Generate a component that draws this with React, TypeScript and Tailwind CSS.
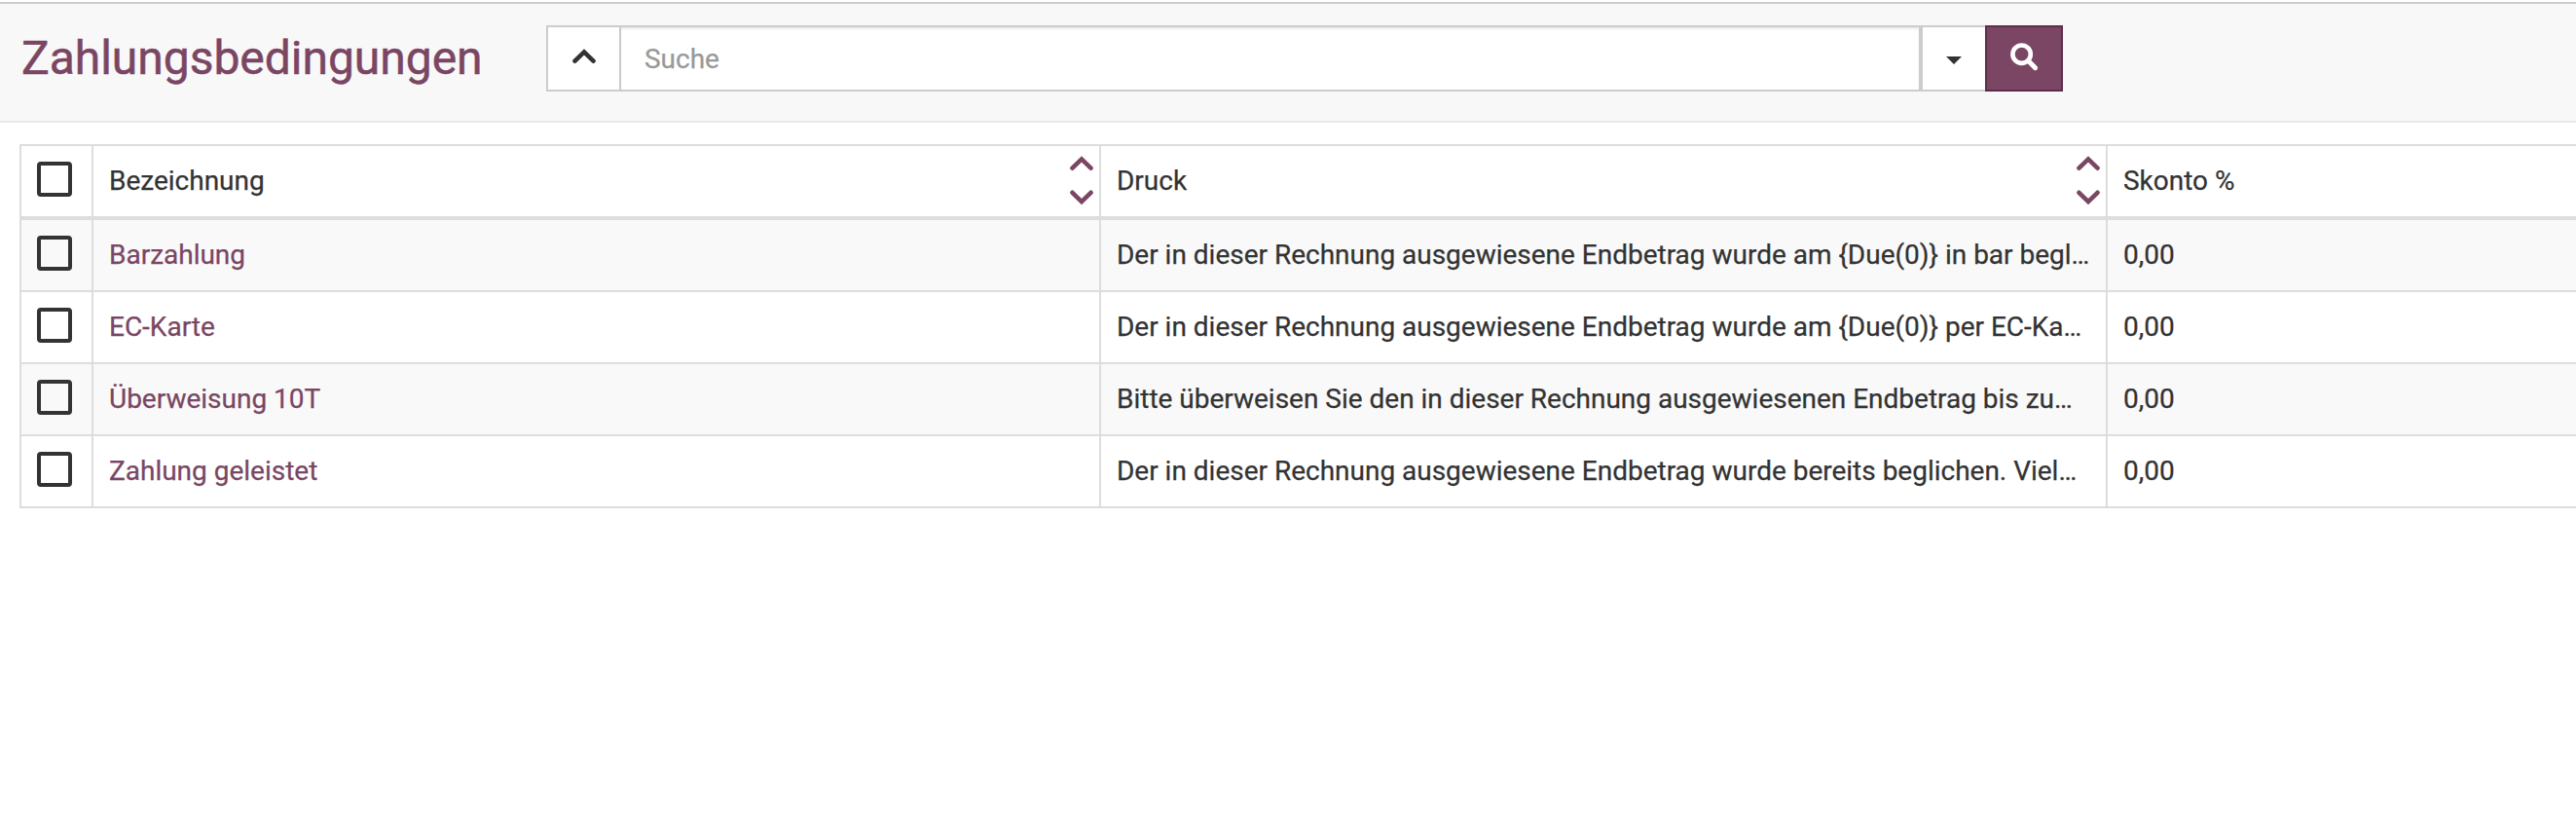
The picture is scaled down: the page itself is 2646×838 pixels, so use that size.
const rows = [
  { name: "Barzahlung", print: "Der in dieser Rechnung ausgewiesene Endbetrag wurde am {Due(0)} in bar begl…", discount: "0,00" },
  { name: "EC-Karte", print: "Der in dieser Rechnung ausgewiesene Endbetrag wurde am {Due(0)} per EC-Ka…", discount: "0,00" },
  { name: "Überweisung 10T", print: "Bitte überweisen Sie den in dieser Rechnung ausgewiesenen Endbetrag bis zu…", discount: "0,00" },
  { name: "Zahlung geleistet", print: "Der in dieser Rechnung ausgewiesene Endbetrag wurde bereits beglichen. Viel…", discount: "0,00" },
];

const grid = "grid grid-cols-[74px_1035px_1034px_1fr]";
const cell = "flex h-[72px] items-center border-r-2 border-[#ddd] pl-4 whitespace-nowrap";

function Chevron({ down = false }: { down?: boolean }) {
  return (
    <svg width="24" height="16" viewBox="0 0 24 16" className="block" fill="none" stroke="currentColor" strokeWidth="4.6" strokeLinecap="round" strokeLinejoin="miter">
      <path d={down ? "M2.5 2.8 12 12.1 21.5 2.8" : "M2.5 12.7 12 3.4 21.5 12.7"} />
    </svg>
  );
}

function Sorter() {
  return (
    <button aria-label="Sortieren" className="mr-1.5 ml-auto flex h-[72px] flex-col justify-between pt-[10px] pb-[11px] text-[#7a4663]">
      <Chevron />
      <Chevron down />
    </button>
  );
}

function Checkbox() {
  return <span role="checkbox" aria-checked="false" className="mb-1 block size-9 rounded-[4px] border-4 border-[#333]" />;
}

export default function App() {
  return (
    <div className="h-[838px] w-full overflow-hidden bg-white pt-0.5 font-['Roboto',sans-serif] text-[28px] leading-10 tracking-[-0.01px] text-[#333] [-webkit-text-stroke:0.25px]">
      <header className="flex h-[124px] border-t-2 border-b-2 border-t-[#ccc] border-b-[#e7e7e7] bg-[#f8f8f8]">
        <h1 className="w-[561px] pt-[26px] pl-[22px] text-[48px] leading-[60px] tracking-[-0.03px] text-[#7a4663] [-webkit-text-stroke:0.5px]">Zahlungsbedingungen</h1>
        <div className="mt-[22px] flex h-[68px]">
          <button aria-label="Einklappen" className="flex w-[75px] items-center justify-center border-2 border-r-0 border-[#ccc] bg-white pb-1">
            <Chevron />
          </button>
          <input
            placeholder="Suche"
            className="w-[1337px] border-2 border-[#ccc] bg-white px-6 pt-0.5 shadow-[inset_0_2px_2px_rgba(0,0,0,0.075)] outline-none placeholder:text-[#999]"
          />
          <button aria-label="Optionen" className="flex w-[66px] items-center justify-center border-2 border-r-0 border-[#ccc] bg-white">
            <svg width="16" height="8" viewBox="0 0 16 8" className="mt-1 block" fill="currentColor"><path d="M0 0h16L8 8z" /></svg>
          </button>
          <button aria-label="Suchen" className="flex w-20 items-center justify-center border-2 border-[#5d2d4b] bg-[#7a4663] text-white">
            <svg width="28" height="28" viewBox="0 0 28 28" className="block overflow-visible" fill="none" stroke="currentColor">
              <circle cx="11.6" cy="9.7" r="9.2" strokeWidth="4.6" />
              <path d="M18.5 16.6 25.6 23.7" strokeWidth="5" strokeLinecap="round" />
            </svg>
          </button>
        </div>
      </header>
      <main className="mt-[22px] ml-5 border-t-2 border-l-2 border-[#ddd]">
        <div className={`${grid} border-b-4 border-[#ddd]`}>
          <div className={cell}><Checkbox /></div>
          <div className={cell}>Bezeichnung<Sorter /></div>
          <div className={cell}>Druck<Sorter /></div>
          <div className="flex h-[72px] items-center pl-4">Skonto %</div>
        </div>
        {rows.map((row) => (
          <div key={row.name} className={`${grid} border-b-2 border-[#ddd] odd:bg-white even:bg-[#f9f9f9]`}>
            <div className={cell}><Checkbox /></div>
            <div className={`${cell} text-[#7a4663]`}>{row.name}</div>
            <div className={cell}>{row.print}</div>
            <div className="flex h-[72px] items-center pl-4">{row.discount}</div>
          </div>
        ))}
      </main>
    </div>
  );
}
